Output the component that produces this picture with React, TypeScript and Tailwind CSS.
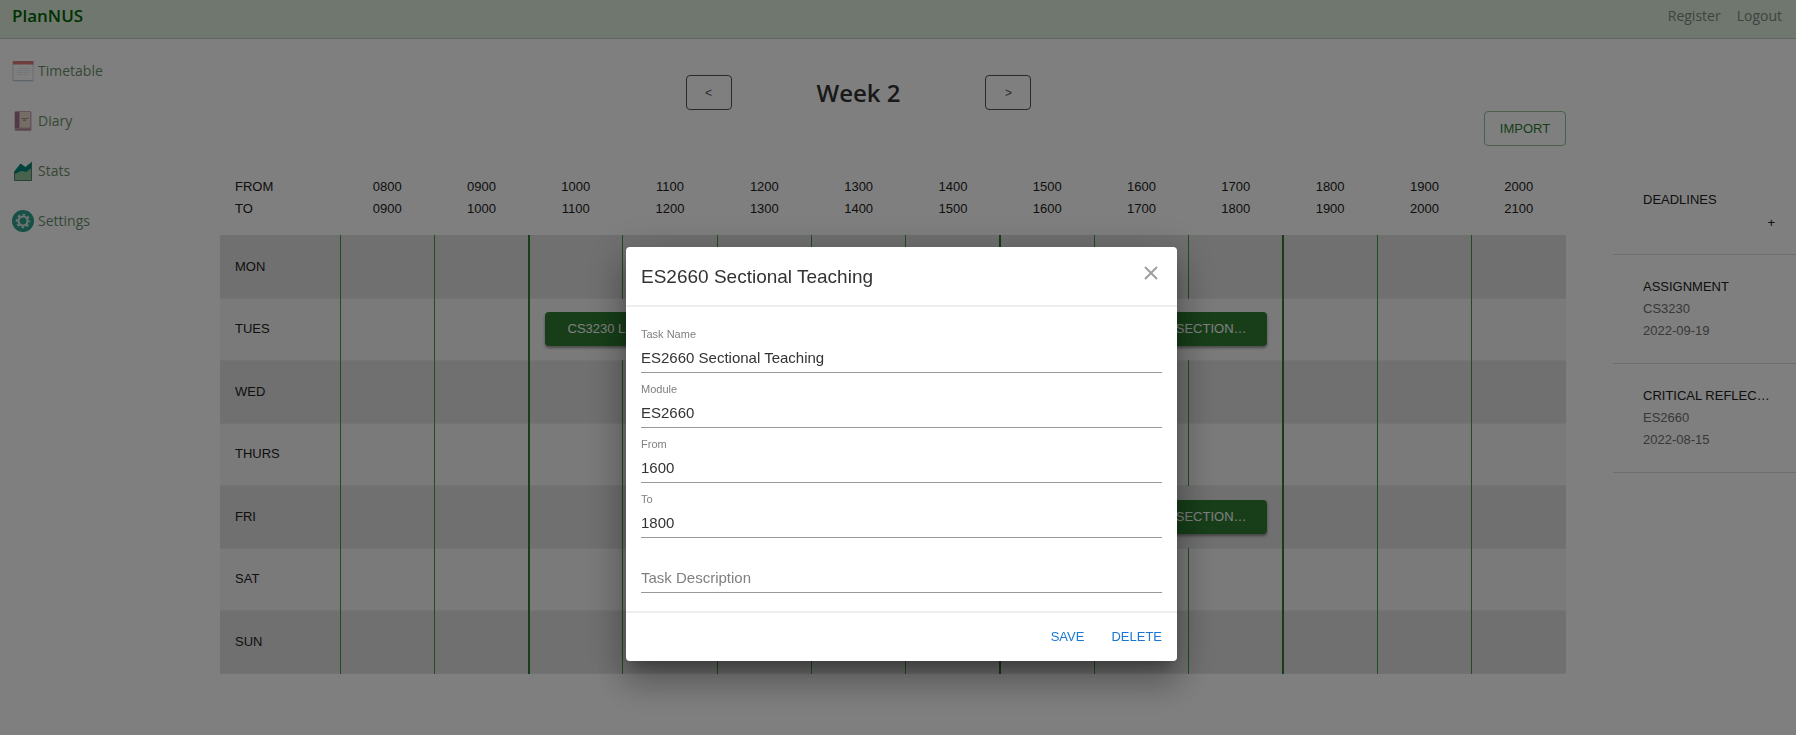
import type { ReactNode } from "react";

const hours = ["0800", "0900", "1000", "1100", "1200", "1300", "1400", "1500", "1600", "1700", "1800", "1900", "2000", "2100"];

type Task = { start: number; span: number; label: string };

const days: { name: string; tasks: Task[] }[] = [
  { name: "MON", tasks: [] },
  { name: "TUES", tasks: [{ start: 2, span: 2, label: "CS3230 Lecture" }, { start: 8, span: 2, label: "ES2660 Sectional Teaching" }] },
  { name: "WED", tasks: [] },
  { name: "THURS", tasks: [] },
  { name: "FRI", tasks: [{ start: 8, span: 2, label: "ES2660 Sectional Teaching" }] },
  { name: "SAT", tasks: [] },
  { name: "SUN", tasks: [] },
];

const strongLines = [2, 7, 10];

const deadlines = [
  { title: "ASSIGNMENT", module: "CS3230", date: "2022-09-19" },
  { title: "CRITICAL REFLECTION", module: "ES2660", date: "2022-08-15" },
];

const fields = [
  { id: "name", label: "Task Name", value: "ES2660 Sectional Teaching" },
  { id: "module", label: "Module", value: "ES2660" },
  { id: "from", label: "From", value: "1600" },
  { id: "to", label: "To", value: "1800" },
];

function TimetableIcon() {
  return (
    <svg viewBox="0 0 22 22" className="size-[22px]">
      <rect x="1" y="1.5" width="20" height="19.5" fill="#fff" fillOpacity=".1" stroke="#d4d8df" />
      <rect x="1" y="1" width="20.5" height="3.5" fill="#d97c7c" />
      <path d="M1 20.5h20" stroke="#c3cdd6" />
      <path d="M7 8.5h11M5 10.5h13M5 12.5h13M5 14.5h11" stroke="#dde1e6" strokeWidth="1.2" strokeDasharray="1.4 .8" />
    </svg>
  );
}

function DiaryIcon() {
  return (
    <svg viewBox="0 0 22 22" className="size-[22px]">
      <rect x="2.5" y="1" width="17" height="20" rx="1.5" fill="#c9a9b8" />
      <path d="M3 2h4v16H3z" fill="#a07590" />
      <path d="M8 2h10v15.5H8z" fill="#e9dccf" />
      <path d="M3.5 18.5h15v1.5h-15z" fill="#b98fa0" />
      <path d="M9.5 8.5h2l1 .8 1-.8h3M11 10.5h3" stroke="#a98b9d" strokeWidth="1.2" fill="none" />
    </svg>
  );
}

function StatsIcon() {
  return (
    <svg viewBox="0 0 22 22" className="size-[22px]">
      <path d="M3 20v-6l5-4 5 2 6.500-5V20z" fill="#8fc79a" />
      <path d="M3 14V10.500L8.500 3.500l5 3.500 6-5v6L14 12l-5-1z" fill="#00897b" />
      <path d="M2.500 11v9.500h17V2" fill="none" stroke="#5f7f68" />
    </svg>
  );
}

function SettingsIcon() {
  return (
    <svg viewBox="0 0 22 22" className="size-[22px]">
      <circle cx="11" cy="11" r="11" fill="#2ca08d" />
      <circle cx="11" cy="11" r="4.5" fill="none" stroke="#d4e9e5" strokeWidth="2.2" />
      <circle cx="11" cy="11" r="6.3" fill="none" stroke="#d4e9e5" strokeWidth="2" strokeDasharray="2.6 2.348" strokeDashoffset="1.3" />
    </svg>
  );
}

const links: { name: string; icon: ReactNode }[] = [
  { name: "Timetable", icon: <TimetableIcon /> },
  { name: "Diary", icon: <DiaryIcon /> },
  { name: "Stats", icon: <StatsIcon /> },
  { name: "Settings", icon: <SettingsIcon /> },
];

function DayRow({ name, tasks, shaded }: { name: string; tasks: Task[]; shaded: boolean }) {
  const cells: ReactNode[] = [];
  for (let i = 0; i < 13; ) {
    const task = tasks.find((t) => t.start === i);
    const line = strongLines.includes(i) ? "border-l-2 border-l-[#2e7d32]" : "border-l border-l-[#429a47]";
    cells.push(
      <td key={i} colSpan={task ? task.span : 1} className={`${line} p-0`}>
        {task && (
          <div className="px-[15px]">
            <button className="block h-[34px] w-full truncate rounded bg-[#2e7d32] px-4 text-center text-[13px] text-white uppercase shadow-[0_2px_3px_rgba(0,0,0,0.4)]">
              {task.label}
            </button>
          </div>
        )}
      </td>,
    );
    i += task ? task.span : 1;
  }
  return (
    <tr className={`border-b border-[#e8e8e8] ${shaded ? "h-[63px] bg-[#e0e0e0]" : "h-[62px] bg-[#f5f5f5]"}`}>
      <th scope="row" className="pl-[15px] text-left font-normal">{name}</th>
      {cells}
    </tr>
  );
}

function TaskDialog() {
  return (
    <div className="fixed inset-0 flex items-center justify-center bg-black/50 pt-[173px] pl-[7px]">
      <form
        role="dialog"
        aria-labelledby="dialog-title"
        className="w-[551px] rounded bg-white text-[#333] shadow-[0_10px_14px_-6px_rgba(0,0,0,0.3),0_22px_35px_3px_rgba(0,0,0,0.2),0_8px_42px_7px_rgba(0,0,0,0.16)]"
      >
        <header className="flex h-[60px] items-start justify-between border-b-2 border-[#eee] px-[15px]">
          <h2 id="dialog-title" className="pt-4 text-[19px] leading-[27px]">ES2660 Sectional Teaching</h2>
          <button type="button" aria-label="Close" className="mt-[15px] flex size-[22px] items-center justify-center">
            <svg viewBox="0 0 14 14" className="size-3.5" stroke="#9e9e9e" strokeWidth="2">
              <path d="M1 1l12 12M13 1L1 13" />
            </svg>
          </button>
        </header>
        <div className="px-[15px] pt-[11px] pb-[18px]">
          {fields.map((f) => (
            <div key={f.id} className="flex h-[55px] flex-col justify-end border-b border-[#999]">
              <label htmlFor={f.id} className="text-[11px] leading-[15px] text-[#808080]">{f.label}</label>
              <input id={f.id} defaultValue={f.value} className="h-[30px] w-full bg-transparent text-[15px] outline-none" />
            </div>
          ))}
          <div className="flex h-[55px] flex-col justify-end border-b border-[#999]">
            <input aria-label="Task Description" placeholder="Task Description" className="h-[30px] w-full bg-transparent text-[15px] outline-none placeholder:text-[#808080]" />
          </div>
        </div>
        <footer className="flex h-[50px] items-center justify-end gap-[27px] border-t-2 border-[#eee] px-[15px] text-[13px] text-[#1976d2]">
          <button type="button">SAVE</button>
          <button type="button">DELETE</button>
        </footer>
      </form>
    </div>
  );
}

export default function App() {
  return (
    <div className="min-h-screen bg-white font-['Liberation_Sans',Arial,sans-serif] text-[13px] text-[#212121]">
      <header className="flex h-[39px] items-start justify-between border-b border-[#c4ccc4] bg-[#dfeedf] px-3 pt-1 font-['Open_Sans','Noto_Sans',sans-serif]">
        <a href="#home" className="text-[17px] leading-6 font-semibold text-[#006400]">PlanNUS</a>
        <nav className="flex gap-4 pr-0.5 text-[14px] leading-6 text-[#7f887f]">
          <a href="#register">Register</a>
          <a href="#logout">Logout</a>
        </nav>
      </header>
      <div className="flex">
        <nav className="flex w-[220px] shrink-0 flex-col gap-7 pt-[21px] pl-3 font-['Open_Sans','Noto_Sans',sans-serif] text-[14px] leading-[22px] text-[#6b8f6b]">
          {links.map((l) => (
            <a key={l.name} href={`#${l.name}`} className="flex items-center gap-1">
              {l.icon}
              {l.name}
            </a>
          ))}
        </nav>
        <main className="min-w-0 flex-1">
          <div className="flex justify-center pt-9 pr-[69px]">
            <div className="flex w-[346px] items-center justify-between">
              <button className="h-[35px] w-[46px] rounded border border-[#555] text-[12px] text-[#555]">&lt;</button>
              <h1 className="font-['Open_Sans','Noto_Sans',sans-serif] text-[24px] leading-[35px] font-semibold text-[#333]">Week 2</h1>
              <button className="h-[35px] w-[46px] rounded border border-[#555] text-[12px] text-[#555]">&gt;</button>
            </div>
          </div>
          <div className="flex justify-end pt-px">
            <button className="h-[35px] w-[82px] rounded border border-[#97be98] text-[#2e7d32]">IMPORT</button>
          </div>
          <table className="mt-[29px] w-full table-fixed border-collapse">
            <colgroup>
              <col className="w-[120px]" />
              <col span={13} />
            </colgroup>
            <thead>
              <tr className="h-[60px] align-top">
                <th scope="col" className="pt-px pl-[15px] text-left leading-[22px] font-normal">FROM<br />TO</th>
                {hours.slice(0, 13).map((h, i) => (
                  <th key={h} scope="col" className="pt-px leading-[22px] font-normal">{h}<br />{hours[i + 1]}</th>
                ))}
              </tr>
            </thead>
            <tbody>
              {days.map((d, i) => (
                <DayRow key={d.name} name={d.name} tasks={d.tasks} shaded={i % 2 === 0} />
              ))}
            </tbody>
          </table>
        </main>
        <aside className="ml-[47px] w-[183px] shrink-0 pt-[149px]">
          <div className="h-[67px] border-b border-[#ddd] pr-[21px] pl-[30px] leading-[23px]">
            <h2>DEADLINES</h2>
            <div className="flex justify-end">
              <button aria-label="Add deadline">+</button>
            </div>
          </div>
          {deadlines.map((d) => (
            <section key={d.title} className="h-[109px] border-b border-[#ddd] pt-[21px] pr-[21px] pl-[30px] leading-[22px] text-[#707070]">
              <h3 className="truncate text-[#212121]">{d.title}</h3>
              <p>{d.module}</p>
              <p>{d.date}</p>
            </section>
          ))}
        </aside>
      </div>
      <TaskDialog />
    </div>
  );
}
